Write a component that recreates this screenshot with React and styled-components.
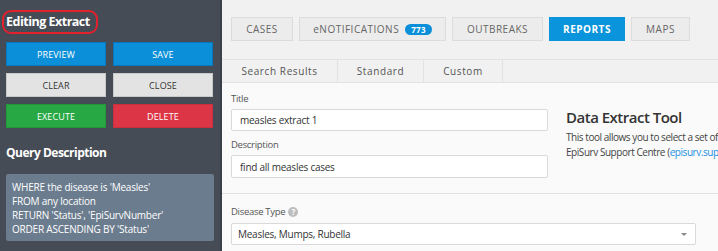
import React from 'react';
import styled, { createGlobalStyle } from 'styled-components';

const GlobalStyle = createGlobalStyle`
  html, body {
    margin: 0;
    padding: 0;
    height: 100%;
    overflow: hidden;
  }
  body {
    font-family: "Open Sans", "Noto Sans", sans-serif;
  }
  #root {
    height: 100%;
  }
`;

const Page = styled.div`
  display: flex;
  height: 251px;
  width: 718px;
  overflow: hidden;
`;

const Sidebar = styled.aside`
  width: 222px;
  flex-shrink: 0;
  background: #464c55;
  border-right: 2px solid #3b4047;
  padding: 9px 6px 0;
  box-sizing: border-box;
`;

const Marked = styled.h2`
  display: inline-block;
  margin: 0 0 8px -4px;
  padding: 0 6px 0 2px;
  border: 2px solid #e3202c;
  border-radius: 9px;
  font-size: 12.5px;
  line-height: 20px;
  font-weight: 700;
  color: #fff;
  letter-spacing: -0.5px;
`;

const ButtonGrid = styled.div`
  display: grid;
  grid-template-columns: 100px 100px;
  column-gap: 7px;
  row-gap: 7px;
`;

const tones = {
  blue: { bg: '#0a8fd8', border: '#0878be', color: '#fff' },
  grey: { bg: '#e3e3e3', border: '#c9c9c9', color: '#333' },
  green: { bg: '#27a844', border: '#23963c', color: '#fff' },
  red: { bg: '#dc3545', border: '#c92f3e', color: '#fff' },
};

const ActionButton = styled.button`
  height: 24px;
  padding: 0;
  border: 1px solid ${(p) => tones[p.$tone].border};
  background: ${(p) => tones[p.$tone].bg};
  color: ${(p) => tones[p.$tone].color};
  font-family: inherit;
  font-size: 9px;
  letter-spacing: 0.1px;
  text-transform: uppercase;
`;

const SectionTitle = styled.h3`
  margin: 16px 0 12px;
  font-size: 12px;
  line-height: 18px;
  font-weight: 700;
  color: #fff;
  letter-spacing: -0.5px;
`;

const QueryBox = styled.div`
  background: #6b7c8e;
  border-radius: 2px;
  padding: 6px 6px 5px;
  color: #fff;
  font-size: 10px;
  line-height: 14px;
  letter-spacing: -0.2px;
`;

const Main = styled.main`
  flex: 1;
  min-width: 0;
  display: flex;
  flex-direction: column;
  background: #f1f1f1;
`;

const TopNav = styled.nav`
  display: flex;
  gap: 6px;
  padding: 17px 0 0 9px;
  height: 42px;
  box-sizing: border-box;
`;

const NavTab = styled.div`
  display: flex;
  align-items: center;
  justify-content: center;
  gap: 6px;
  height: 24px;
  width: ${(p) => p.$w}px;
  box-sizing: border-box;
  border: 1px solid ${(p) => (p.$active ? '#0a94dc' : '#dcdcdc')};
  background: ${(p) => (p.$active ? '#0a94dc' : '#ececec')};
  color: ${(p) => (p.$active ? '#fff' : '#666')};
  font-size: 10px;
  font-weight: ${(p) => (p.$active ? 700 : 400)};
  letter-spacing: 0.5px;
`;

const Badge = styled.span`
  background: #0a8fd8;
  color: #fff;
  font-size: 8px;
  font-weight: 700;
  line-height: 11px;
  padding: 0 6px;
  border-radius: 6px;
  letter-spacing: 0.3px;
`;

const SubTabs = styled.div`
  display: flex;
  margin-top: 17px;
  height: 24px;
  border-top: 1px solid #e2e2e2;
  border-bottom: 1px solid #e2e2e2;
  box-sizing: border-box;
`;

const SubTab = styled.div`
  width: ${(p) => p.$w}px;
  display: flex;
  align-items: center;
  justify-content: center;
  border-right: 1px solid #e2e2e2;
  font-size: 10px;
  color: #555;
  letter-spacing: 0.6px;
`;

const Content = styled.section`
  flex: 1;
  background: #fafafa;
  padding: 9px 0 0 9px;
`;

const FormRow = styled.div`
  display: flex;
  gap: 18px;
`;

const FormColumn = styled.div`
  width: 317px;
  flex-shrink: 0;
`;

const Label = styled.div`
  font-size: 9.5px;
  line-height: 14px;
  color: #555;
  letter-spacing: -0.3px;
  display: flex;
  align-items: center;
  gap: 3px;
  margin-bottom: ${(p) => p.$mb || 3}px;
`;

const Field = styled.div`
  height: ${(p) => p.$h || 22}px;
  box-sizing: border-box;
  border: 1px solid #d9d9d9;
  border-radius: 2px;
  background: #fff;
  display: flex;
  align-items: center;
  justify-content: space-between;
  padding: 0 8px 0 ${(p) => p.$pl || 8}px;
  font-size: 10px;
  letter-spacing: -0.25px;
  color: #333;
  margin-bottom: ${(p) => p.$mb || 0}px;
  width: ${(p) => p.$w || 'auto'};
`;

const Info = styled.div`
  flex: 1;
  min-width: 0;
  padding-top: 14px;
  white-space: nowrap;
  overflow: hidden;
`;

const InfoTitle = styled.h1`
  margin: 0 0 2px;
  font-size: 15px;
  line-height: 22px;
  font-weight: 600;
  color: #333;
  letter-spacing: -0.5px;
`;

const InfoText = styled.p`
  margin: 0;
  font-size: 10px;
  line-height: 15px;
  color: #444;
  letter-spacing: -0.45px;
`;

const Link = styled.span`
  color: #1a8fe3;
`;

const Divider = styled.hr`
  border: 0;
  border-top: 1px solid #e0e0e0;
  margin: 15px 0 11px -9px;
`;

const Help = styled.span`
  width: 10px;
  height: 10px;
  border-radius: 50%;
  background: #bdbdbd;
  color: #fff;
  font-size: 8px;
  font-weight: 700;
  line-height: 10px;
  text-align: center;
  letter-spacing: 0;
`;

const Caret = styled.span`
  width: 0;
  height: 0;
  border-left: 3px solid transparent;
  border-right: 3px solid transparent;
  border-top: 3px solid #888;
`;

export default function App() {
  return (
    <Page>
      <GlobalStyle />
      <Sidebar>
        <Marked>Editing Extract</Marked>
        <ButtonGrid>
          <ActionButton $tone="blue">Preview</ActionButton>
          <ActionButton $tone="blue">Save</ActionButton>
          <ActionButton $tone="grey">Clear</ActionButton>
          <ActionButton $tone="grey">Close</ActionButton>
          <ActionButton $tone="green">Execute</ActionButton>
          <ActionButton $tone="red">Delete</ActionButton>
        </ButtonGrid>
        <SectionTitle>Query Description</SectionTitle>
        <QueryBox>
          WHERE the disease is 'Measles'<br />
          FROM any location<br />
          RETURN 'Status', 'EpiSurvNumber'<br />
          ORDER ASCENDING BY 'Status'
        </QueryBox>
      </Sidebar>
      <Main>
        <TopNav>
          <NavTab $w={62}>CASES</NavTab>
          <NavTab $w={147}>
            eNOTIFICATIONS <Badge>773</Badge>
          </NavTab>
          <NavTab $w={91}>OUTBREAKS</NavTab>
          <NavTab $w={76} $active>REPORTS</NavTab>
          <NavTab $w={59}>MAPS</NavTab>
        </TopNav>
        <SubTabs>
          <SubTab $w={115}>Search Results</SubTab>
          <SubTab $w={85}>Standard</SubTab>
          <SubTab $w={78}>Custom</SubTab>
        </SubTabs>
        <Content>
          <FormRow>
            <FormColumn>
              <Label>Title</Label>
              <Field $mb={7}>measles extract 1</Field>
              <Label>Description</Label>
              <Field $h={23}>find all measles cases</Field>
            </FormColumn>
            <Info>
              <InfoTitle>Data Extract Tool</InfoTitle>
              <InfoText>This tool allows you to select a set of data</InfoText>
              <InfoText>
                EpiSurv Support Centre (<Link>episurv.support</Link>)
              </InfoText>
            </Info>
          </FormRow>
          <Divider />
          <Label $mb={4}>
            Disease Type <Help>?</Help>
          </Label>
          <Field $w="465px" $pl={6}>
            Measles, Mumps, Rubella
            <Caret />
          </Field>
        </Content>
      </Main>
    </Page>
  );
}
